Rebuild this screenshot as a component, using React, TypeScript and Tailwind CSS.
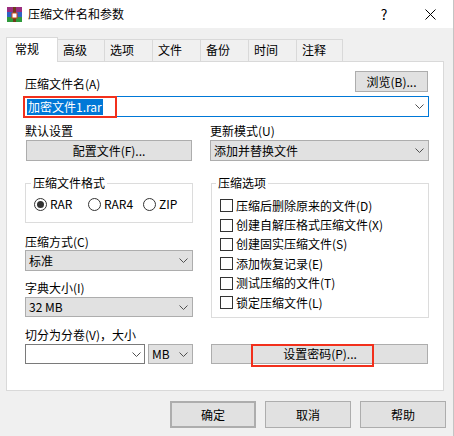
import React from "react"

const Chevron = () => (
    <svg width="9" height="5" viewBox="0 0 9 5" className="shrink-0">
        <path d="M0.5 0.5 L4.5 4.5 L8.5 0.5" fill="none" stroke="#505050" strokeWidth="1" />
    </svg>
)

const WinRarIcon = () => (
    <svg width="15" height="15" viewBox="0 0 15 15" className="ml-[7px] shrink-0">
        <rect x="0" y="0" width="15" height="5" fill="#9b2d7f" />
        <rect x="0" y="5" width="15" height="5" fill="#2f62c4" />
        <rect x="0" y="10" width="15" height="5" fill="#2f9a3c" />
        <rect x="6" y="0" width="3" height="15" fill="#6d3d1c" />
        <rect x="5" y="6" width="5" height="5" fill="#ffffff" stroke="#d2461e" strokeWidth="1" />
    </svg>
)

const Select = ({ value, className = "" }: { value: string; className?: string }) => (
    <div
        className={`flex items-center justify-between border border-[#adadad] bg-[#e1e1e1] pl-[3px] pr-[4px] ${className}`}
    >
        <span>{value}</span>
        <Chevron />
    </div>
)

const Button = ({ label, className = "" }: { label: string; className?: string }) => (
    <div className={`flex items-center justify-center border border-[#adadad] bg-[#e1e1e1] ${className}`}>
        {label}
    </div>
)

const Radio = ({ label, checked, className = "" }: { label: string; checked?: boolean; className?: string }) => (
    <div className={`flex items-center ${className}`}>
        <span className="flex h-[13px] w-[13px] items-center justify-center rounded-full border border-[#333]">
            {checked && <span className="h-[7px] w-[7px] rounded-full bg-[#333]" />}
        </span>
        <span className="ml-[3px]">{label}</span>
    </div>
)

const Check = ({ label }: { label: string }) => (
    <div className="flex h-[19.4px] items-center pl-[8px]">
        <span className="h-[13px] w-[13px] border border-[#333] bg-white" />
        <span className="ml-[3px]">{label}</span>
    </div>
)

const tabs = ["高级", "选项", "文件", "备份", "时间", "注释"]
const tabWidths = ["w-[47px]", "w-[48px]", "w-[48px]", "w-[48px]", "w-[48px]", "w-[46px]"]

const options = [
    "压缩后删除原来的文件(D)",
    "创建自解压格式压缩文件(X)",
    "创建固实压缩文件(S)",
    "添加恢复记录(E)",
    "测试压缩的文件(T)",
    "锁定压缩文件(L)",
]

export default function App() {
    return (
        <div className="flex h-[436px] w-[454px] flex-col overflow-hidden border-r border-[#c4c4c4] bg-[#f0f0f0] font-['Noto_Sans_CJK_SC',sans-serif] text-[12px] leading-[16px] text-black">
            {/* title bar */}
            <div className="flex h-[28px] shrink-0 items-center bg-white">
                <WinRarIcon />
                <span className="ml-[6px]">压缩文件名和参数</span>
                <span className="ml-auto flex h-[28px] w-[46px] items-center justify-center text-[14px]">?</span>
                <span className="flex h-[28px] w-[46px] items-center justify-center">
                    <svg width="11" height="11" viewBox="0 0 11 11">
                        <path d="M0.5 0.5 L10.5 10.5 M10.5 0.5 L0.5 10.5" stroke="#000" strokeWidth="1" />
                    </svg>
                </span>
            </div>

            {/* tabs */}
            <div className="relative z-10 mt-[9px] -mb-px flex h-[25px] items-start pl-[6px]">
                <div className="h-[25px] w-[52px] border-x border-t border-[#d9d9d9] bg-white pl-[8px] pt-[3px]">
                    常规
                </div>
                {tabs.map((t, i) => (
                    <div
                        key={t}
                        className={`mt-[2px] h-[22px] border-r border-t border-[#d9d9d9] pl-[5px] pt-[2px] ${tabWidths[i]}`}
                    >
                        {t}
                    </div>
                ))}
            </div>

            {/* panel */}
            <div className="ml-[6px] h-[330px] w-[438px] shrink-0 border border-[#d9d9d9] bg-white pl-[18px] pt-[9px]">
                <div className="flex h-[21px] w-[404px] items-end justify-between">
                    <span>压缩文件名(A)</span>
                    <Button label="浏览(B)..." className="mr-[1px] h-[21px] w-[73px]" />
                </div>

                <div className="-ml-px mt-[4px] flex h-[21px] w-[405px] items-center justify-between border border-[#0078d7] bg-white pr-[4px]">
                    <span className="-ml-[2px] flex h-[22px] items-center border-2 border-[#f2301c] pl-[2px] pr-[12px]">
                        <span className="bg-[#0078d7] px-px text-white">加密文件1.rar</span>
                    </span>
                    <Chevron />
                </div>

                <div className="mt-[6px] flex">
                    <div className="w-[168px]">
                        <div>默认设置</div>
                        <Button label="配置文件(F)..." className="ml-px mt-[1px] h-[21px] w-[166px]" />
                    </div>
                    <div className="ml-[17px] w-[219px]">
                        <div>更新模式(U)</div>
                        <Select value="添加并替换文件" className="mt-[1px] h-[21px] w-[219px]" />
                    </div>
                </div>

                <div className="mt-[14px] flex items-start">
                    <div className="w-[168px]">
                        <fieldset className="h-[48px] border border-[#dcdcdc]">
                            <legend className="ml-[5px] px-[2px]">压缩文件格式</legend>
                            <div className="mt-[5px] flex h-[16px] pl-[8px]">
                                <Radio label="RAR" checked className="w-[54px]" />
                                <Radio label="RAR4" className="w-[55px]" />
                                <Radio label="ZIP" />
                            </div>
                        </fieldset>
                        <div className="mt-[11px]">压缩方式(C)</div>
                        <Select value="标准" className="h-[21px] w-[168px]" />
                        <div className="mt-[9px]">字典大小(I)</div>
                        <Select value="32 MB" className="mt-[1px] h-[20px] w-[168px]" />
                    </div>
                    <div className="ml-[18px] w-[218px]">
                        <fieldset className="h-[143px] border border-[#dcdcdc]">
                            <legend className="ml-[4px] px-[2px]">压缩选项</legend>
                            <div className="mt-[5px]">
                                {options.map((o) => (
                                    <Check key={o} label={o} />
                                ))}
                            </div>
                        </fieldset>
                    </div>
                </div>

                <div className="mt-[9px] flex">
                    <div className="w-[168px]">
                        <div>切分为分卷(V)，大小</div>
                        <div className="mt-[1px] flex">
                            <div className="flex h-[20px] w-[120px] items-center justify-end border border-[#7a7a7a] bg-white pr-[3px]">
                                <Chevron />
                            </div>
                            <Select value="MB" className="ml-[3px] h-[20px] w-[45px]" />
                        </div>
                    </div>
                    <div className="ml-[18px] w-[218px] pt-[17px]">
                        <div className="relative flex h-[20px] w-[217px] items-center justify-center border border-[#adadad] bg-[#e1e1e1]">
                            <span className="pl-[1px]">设置密码(P)...</span>
                            <span className="absolute left-[39px] top-[-1px] h-[23px] w-[123px] border-2 border-[#f2301c]" />
                        </div>
                    </div>
                </div>
            </div>

            {/* bottom buttons */}
            <div className="mt-[10px] flex justify-end gap-[9px] pr-[7px]">
                <Button label="确定" className="h-[27px] w-[86px] border-2 border-[#0078d7]" />
                <Button label="取消" className="h-[27px] w-[86px]" />
                <Button label="帮助" className="h-[27px] w-[86px]" />
            </div>
        </div>
    )
}
